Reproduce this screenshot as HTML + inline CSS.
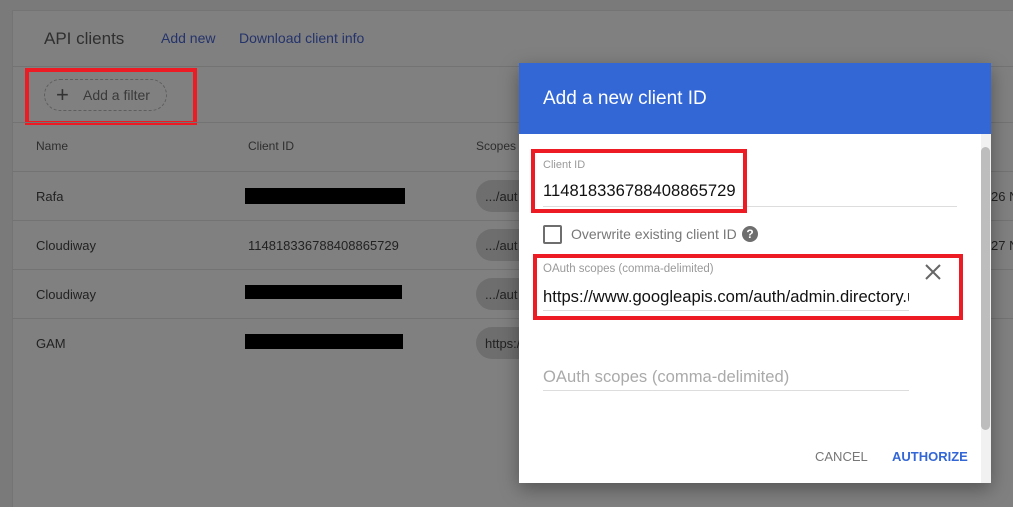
<!DOCTYPE html>
<html style="background:#7a7a7a"><head><style>
*{margin:0;padding:0;box-sizing:border-box}
body{width:1013px;height:507px;overflow:hidden;background:#7a7a7a;font-family:"Liberation Sans",Arial,sans-serif;position:relative}
.a{position:absolute}
.line{position:absolute;left:12px;right:0;height:1px;background:#737373}
.t{position:absolute;font-size:13px;color:#222;white-space:nowrap}
.bar{position:absolute;background:#000;height:16px}
.chip{position:absolute;left:476px;width:60px;height:32px;border-radius:16px;background:#6e6e6e;font-size:13px;color:#222;padding:9px 0 0 9px}
.red{position:absolute;border:4px solid #ed1c24}
</style></head><body>
<div class="a" style="left:12px;top:10px;right:0;bottom:0;background:#808080;border-left:1px solid #747474;border-top:1px solid #747474"></div>
<div class="t" style="left:44px;top:29px;font-size:17px;color:#2f2f2f">API clients</div>
<div class="t" style="left:161px;top:30px;font-size:14px;color:#24336b">Add new</div>
<div class="t" style="left:239px;top:30px;font-size:14px;color:#24336b">Download client info</div>
<div class="line" style="top:66px"></div>
<div class="a" style="left:44px;top:79px;width:123px;height:32px;border:1px dashed #5e5e5e;border-radius:16px"></div>
<div class="t" style="left:56px;top:82px;font-size:22px;color:#333">+</div>
<div class="t" style="left:83px;top:87px;font-size:14px;color:#3a3a3a">Add a filter</div>
<div class="red" style="left:25px;top:68px;width:172px;height:57px"></div>
<div class="line" style="top:122px"></div>
<div class="t" style="left:36px;top:139px;font-size:12px;color:#2e2e2e">Name</div>
<div class="t" style="left:248px;top:139px;font-size:12px;color:#2e2e2e">Client ID</div>
<div class="t" style="left:476px;top:139px;font-size:12px;color:#2e2e2e">Scopes</div>
<div class="line" style="top:171px"></div>
<div class="t" style="left:36px;top:189px">Rafa</div>
<div class="bar" style="left:245px;top:188px;width:160px"></div>
<div class="chip" style="top:180px">.../aut</div>
<div class="line" style="top:220px"></div>
<div class="t" style="left:36px;top:238px">Cloudiway</div>
<div class="t" style="left:248px;top:238px">114818336788408865729</div>
<div class="chip" style="top:229px">.../aut</div>
<div class="line" style="top:269px"></div>
<div class="t" style="left:36px;top:287px">Cloudiway</div>
<div class="bar" style="left:245px;top:285px;width:157px;height:14px"></div>
<div class="chip" style="top:278px">.../aut</div>
<div class="line" style="top:318px"></div>
<div class="t" style="left:36px;top:336px">GAM</div>
<div class="bar" style="left:245px;top:334px;width:158px;height:15px"></div>
<div class="chip" style="top:327px">https:/</div>
<div class="t" style="left:991px;top:189px">26 N</div>
<div class="t" style="left:991px;top:238px">27 N</div>

<div class="a" style="left:519px;top:63px;width:472px;height:420px;background:#fff;box-shadow:0 6px 18px rgba(0,0,0,.35)"></div>
<div class="a" style="left:519px;top:63px;width:472px;height:71px;background:#3367d6"></div>
<div class="t" style="left:543px;top:88px;font-size:19px;color:#fff">Add a new client ID</div>
<div class="a" style="left:981px;top:134px;width:10px;height:349px;background:#f1f1f1"></div>
<div class="a" style="left:981px;top:147px;width:9px;height:283px;background:#bdbdbd;border-radius:5px"></div>
<div class="t" style="left:543px;top:159px;font-size:11px;color:#9a9a9a">Client ID</div>
<div class="t" style="left:543px;top:181px;font-size:16.6px;color:#111">114818336788408865729</div>
<div class="a" style="left:543px;top:206px;width:414px;height:1px;background:#ddd"></div>
<div class="red" style="left:531px;top:149px;width:216px;height:64px"></div>
<div class="a" style="left:543px;top:225px;width:19px;height:19px;border:2px solid #6e6e6e;border-radius:2px"></div>
<div class="t" style="left:571px;top:226px;font-size:14px;color:#777">Overwrite existing client ID</div>
<div class="a" style="left:742px;top:226px;width:16px;height:16px;border-radius:50%;background:#6e6e6e;color:#fff;font-size:12px;font-weight:bold;text-align:center;line-height:16px">?</div>
<div class="t" style="left:543px;top:263px;font-size:11.5px;color:#9a9a9a">OAuth scopes (comma-delimited)</div>
<svg class="a" style="left:925px;top:264px" width="16" height="16" viewBox="0 0 16 16"><path d="M1 1L15 15M15 1L1 15" stroke="#666" stroke-width="2"/></svg>
<div class="a" style="left:543px;top:285px;width:366px;height:24px;overflow:hidden"><div class="t" style="left:0;top:2px;font-size:16.6px;color:#111">https://www.googleapis.com/auth/admin.directory.user</div></div>
<div class="a" style="left:543px;top:310px;width:366px;height:1px;background:#ddd"></div>
<div class="red" style="left:533px;top:254px;width:430px;height:66px"></div>
<div class="t" style="left:543px;top:367px;font-size:16.6px;color:#aaa">OAuth scopes (comma-delimited)</div>
<div class="a" style="left:543px;top:390px;width:366px;height:1px;background:#ddd"></div>
<div class="t" style="left:815px;top:449px;font-size:13px;color:#777">CANCEL</div>
<div class="t" style="left:892px;top:449px;font-size:13px;color:#3367d6;font-weight:bold">AUTHORIZE</div>
</body></html>
